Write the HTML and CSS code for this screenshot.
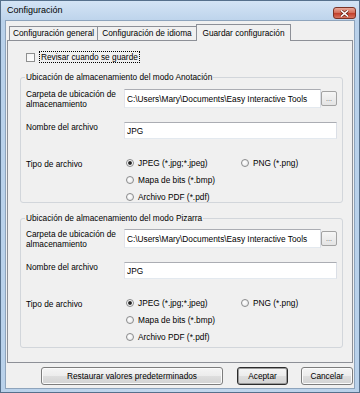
FILE: index.html
```html
<!DOCTYPE html>
<html lang="es">
<head>
  <meta charset="UTF-8">
  <meta name="viewport" content="width=device-width, initial-scale=1">
  <title>Configuración</title>
  <link rel="stylesheet" href="styles.css">
</head>
<body>
  <div class="window" role="dialog" aria-label="Configuración">
    <div class="titlebar">
      <span class="title">Configuración</span>
      <button type="button" class="close" aria-label="Cerrar">
        <svg width="9" height="7" viewBox="0 0 9 7">
          <path d="M1 0.5 L8 6.5 M8 0.5 L1 6.5" stroke="#6a2418" stroke-width="3"/>
          <path d="M1 0.5 L8 6.5 M8 0.5 L1 6.5" stroke="#fff" stroke-width="1.6"/>
        </svg>
      </button>
    </div>

    <div class="client">
      <div class="tabs">
        <div class="tab tab-general">Configuración general</div>
        <div class="tab tab-idioma">Configuración de idioma</div>
        <div class="tab tab-guardar active">Guardar configuración</div>
      </div>

      <div class="panel">
        <label class="check">
          <input type="checkbox">
          <span class="focus">Revisar cuando se guarde</span>
        </label>

        <fieldset class="group">
          <legend>Ubicación de almacenamiento del modo Anotación</legend>
          <div class="row row-folder">
            <div class="label">Carpeta de ubicación de<br>almacenamiento</div>
            <div class="control">
              <input type="text" class="field path" value="C:\Users\Mary\Documents\Easy Interactive Tools">
              <button type="button" class="browse">...</button>
            </div>
          </div>
          <div class="row row-name">
            <div class="label">Nombre del archivo</div>
            <input type="text" class="field" value="JPG">
          </div>
          <div class="row row-type">
            <div class="label">Tipo de archivo</div>
            <div class="radios">
              <label class="radio"><input type="radio" name="tipo1" checked>JPEG (*.jpg;*.jpeg)</label>
              <label class="radio"><input type="radio" name="tipo1">PNG (*.png)</label>
              <label class="radio"><input type="radio" name="tipo1">Mapa de bits (*.bmp)</label>
              <label class="radio first-col"><input type="radio" name="tipo1">Archivo PDF (*.pdf)</label>
            </div>
          </div>
        </fieldset>

        <fieldset class="group group-pizarra">
          <legend>Ubicación de almacenamiento del modo Pizarra</legend>
          <div class="row row-folder">
            <div class="label">Carpeta de ubicación de<br>almacenamiento</div>
            <div class="control">
              <input type="text" class="field path" value="C:\Users\Mary\Documents\Easy Interactive Tools">
              <button type="button" class="browse">...</button>
            </div>
          </div>
          <div class="row row-name">
            <div class="label">Nombre del archivo</div>
            <input type="text" class="field" value="JPG">
          </div>
          <div class="row row-type">
            <div class="label">Tipo de archivo</div>
            <div class="radios">
              <label class="radio"><input type="radio" name="tipo2" checked>JPEG (*.jpg;*.jpeg)</label>
              <label class="radio"><input type="radio" name="tipo2">PNG (*.png)</label>
              <label class="radio"><input type="radio" name="tipo2">Mapa de bits (*.bmp)</label>
              <label class="radio first-col"><input type="radio" name="tipo2">Archivo PDF (*.pdf)</label>
            </div>
          </div>
        </fieldset>
      </div>

      <div class="actions">
        <button type="button" class="btn btn-reset">Restaurar valores predeterminados</button>
        <button type="button" class="btn btn-ok">Aceptar</button>
        <button type="button" class="btn btn-cancel">Cancelar</button>
      </div>
    </div>
  </div>
</body>
</html>
```

FILE: styles.css
```css
/* Base */
* {
  box-sizing: border-box;
}
body {
  margin: 0;
  background: #fff;
}
button,
input {
  font: inherit;
  color: inherit;
}

/* Window frame */
.window {
  width: 360px;
  height: 393px;
  display: flex;
  flex-direction: column;
  padding: 0 4px 3px;
  border: 1px solid #56708c;
  background: linear-gradient(90deg, #b9d1ea, #c3d8ee 50%, #b9d1ea);
  font-family: "Liberation Sans", Arial, sans-serif;
  font-size: 8.3px;
  color: #000;
}
.titlebar {
  height: 19px;
  margin: 0 -4px;
  padding: 0 3px 0 6px;
  display: flex;
  justify-content: space-between;
  align-items: flex-start;
  background: linear-gradient(#d4e4f5, #bed4ec);
}
.title {
  font-size: 9px;
  line-height: 19px;
}
.close {
  width: 23px;
  height: 12px;
  margin-top: 6px;
  padding: 0;
  display: flex;
  align-items: center;
  justify-content: center;
  border: 1px solid #7a3326;
  border-radius: 3px;
  background: linear-gradient(#e9a99a, #d5705c 45%, #c2412d 55%, #d87460);
}

/* Client area */
.client {
  flex: 1;
  display: flex;
  flex-direction: column;
  border: 1px solid #8ea4bc;
  background: #f0f0f0;
}

/* Tabs */
.tabs {
  height: 16px;
  margin: 3px 0 0 1px;
  padding-left: 2px;
  display: flex;
  align-items: flex-end;
  position: relative;
  z-index: 1;
}
.tab {
  height: 14px;
  border: 1px solid #8d9097;
  border-bottom: 0;
  background: #f0f0f0;
  line-height: 13px;
  text-align: center;
  white-space: nowrap;
}
.tab-general {
  width: 89px;
}
.tab-idioma {
  width: 100px;
  margin-left: -1px;
}
.tab-guardar {
  width: 95px;
  margin-left: -1px;
}
.tab.active {
  height: 17px;
  margin-bottom: -1px;
  line-height: 16px;
}

.panel {
  height: 323px;
  margin: 0 1px;
  padding: 10px 9px 0 12px;
  border: 1px solid #8d9097;
  background: #f0f0f0;
}

/* Checkbox */
.check {
  height: 12px;
  margin-left: 6px;
  display: flex;
  align-items: center;
}
.check input {
  appearance: none;
  width: 9px;
  height: 9px;
  margin: 0;
  border: 1px solid #8e8f8f;
  background: linear-gradient(135deg, #f4f4f4, #fff);
}
.focus {
  margin-left: 4px;
  padding: 0 1px;
  border: 1px dotted #000;
  line-height: 10px;
}

/* Group boxes */
.group {
  min-width: 0;
  margin: 9px 0 0;
  padding: 6px 5px 0;
  border: 1px solid #d2d6db;
  border-radius: 3px;
}
.group-pizarra {
  margin-top: 10px;
  padding-top: 5px;
  padding-bottom: 5px;
}
.group legend {
  height: 11px;
  margin-left: -1px;
  padding: 0 1px;
  line-height: 11px;
}

.row {
  display: grid;
  grid-template-columns: 98px 1fr;
  align-items: start;
}
.label {
  line-height: 10px;
  white-space: nowrap;
}
.row-folder {
  height: 19px;
}
.row-folder .label {
  padding-top: 1px;
  line-height: 9.5px;
}
.row-name {
  height: 17px;
  margin-top: 14px;
}
.row-type {
  height: 44px;
  margin-top: 19px;
}
.row-type .label {
  padding-top: 1px;
}

.control {
  display: flex;
  align-items: flex-start;
}
.field {
  width: 100%;
  height: 17px;
  margin: 0;
  padding: 0 2px;
  border: 1px solid;
  border-color: #abadb3 #dbdfe6 #e3e9ef #e2e3ea;
  background: #fff;
  outline: none;
}
.field.path {
  width: 197px;
  height: 19px;
}
.browse {
  width: 16px;
  height: 15px;
  margin-top: 2px;
  padding: 0;
  border: 1px solid #a3a3a3;
  border-radius: 2px;
  background: linear-gradient(#f6f6f6, #e4e4e4);
  color: #555;
  font-size: 7px;
  line-height: 8px;
}

/* Radio buttons */
.radios {
  padding-left: 2px;
  display: grid;
  grid-template-columns: 115px auto;
  row-gap: 7px;
}
.radio {
  height: 10px;
  display: flex;
  align-items: center;
  line-height: 10px;
  white-space: nowrap;
}
.radio.first-col {
  grid-column: 1;
}
.radio input {
  appearance: none;
  width: 8px;
  height: 8px;
  margin: 0 4px 0 0;
  border: 1px solid #8a8b8c;
  border-radius: 50%;
  background: radial-gradient(circle at 40% 40%, #fff, #e2e3e4);
}
.radio input:checked {
  background: radial-gradient(circle, #1a1a1a 0, #2a2a2a 1.4px, #fff 2.4px, #e2e3e4 4px);
}

/* Dialog buttons */
.actions {
  height: 18px;
  margin-top: 4px;
  padding-right: 1px;
  display: flex;
  justify-content: flex-end;
}
.btn {
  height: 18px;
  padding: 0;
  border: 1px solid #7d7d7d;
  border-radius: 3px;
  background: linear-gradient(#f5f5f5, #ececec 50%, #dedede 51%, #d3d3d3);
  box-shadow: inset 0 0 0 1px #fbfbfb;
  line-height: 16px;
  white-space: nowrap;
}
.btn-reset {
  width: 182px;
}
.btn-ok {
  width: 51px;
  margin-left: 14px;
  border-color: #2c2c2c;
  box-shadow: inset 0 0 0 1px #9a9a9a;
}
.btn-cancel {
  width: 52px;
  margin-left: 13px;
}
```
